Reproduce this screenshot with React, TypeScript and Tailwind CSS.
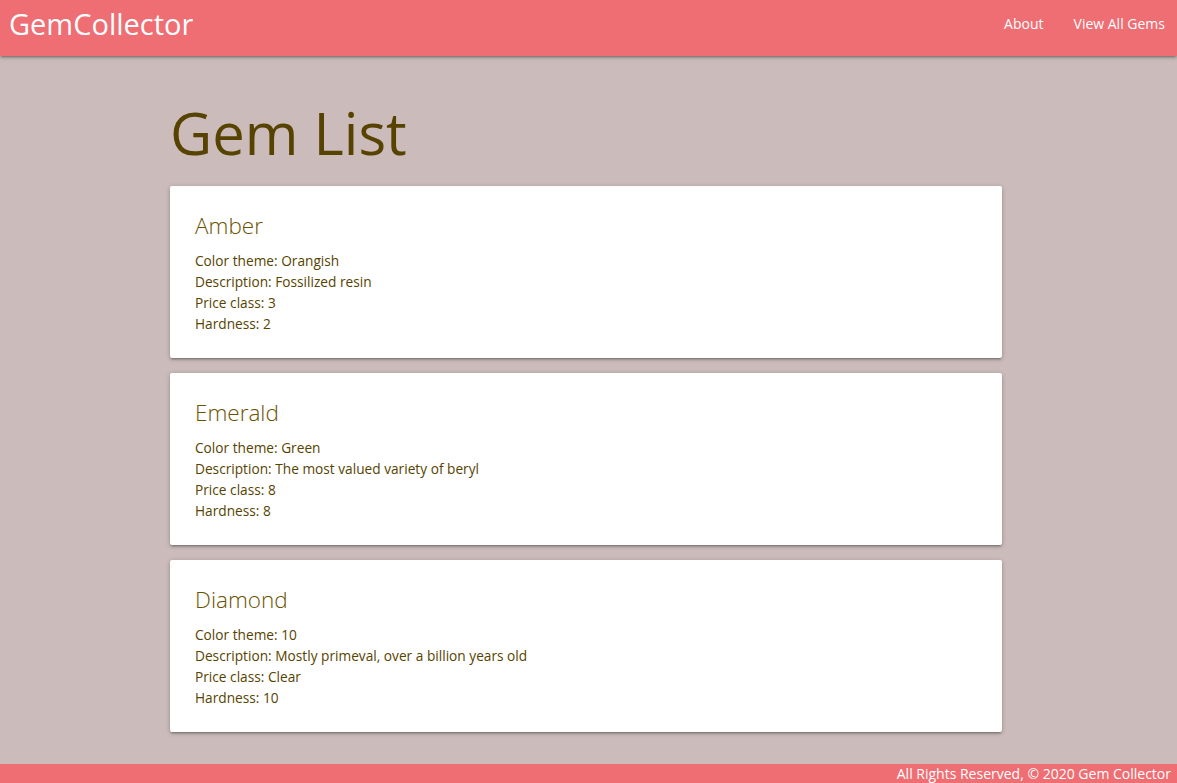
const gems = [
  { name: "Amber", color: "Orangish", description: "Fossilized resin", price: "3", hardness: "2" },
  { name: "Emerald", color: "Green", description: "The most valued variety of beryl", price: "8", hardness: "8" },
  { name: "Diamond", color: "10", description: "Mostly primeval, over a billion years old", price: "Clear", hardness: "10" },
];

const font = "font-['Segoe_UI','Open_Sans',sans-serif]";

function GemCard({ gem }: { gem: (typeof gems)[number] }) {
  return (
    <div className="mb-[15px] rounded-[2px] bg-white p-6 pl-[25px] shadow-[0_2px_2px_0_rgba(0,0,0,0.14),0_3px_1px_-2px_rgba(0,0,0,0.12),0_1px_5px_0_rgba(0,0,0,0.2)]">
      <span className="mb-2 block text-[22.5px] font-light leading-8 text-[#6b5200]">{gem.name}</span>
      <p className="text-[13.7px] leading-[21px]">Color theme: {gem.color}</p>
      <p className="text-[13.7px] leading-[21px]">Description: {gem.description}</p>
      <p className="text-[13.7px] leading-[21px]">Price class: {gem.price}</p>
      <p className="text-[13.7px] leading-[21px]">Hardness: {gem.hardness}</p>
    </div>
  );
}

export default function App() {
  return (
    <div className={`flex min-h-screen flex-col bg-[#cbbbbb] text-[#574300] ${font}`}>
      <nav className="relative z-10 flex h-[56px] items-start justify-between bg-[#ee6e73] text-white shadow-[0_2px_2px_0_rgba(0,0,0,0.14),0_3px_1px_-2px_rgba(0,0,0,0.12),0_1px_5px_0_rgba(0,0,0,0.2)]">
        <a className="pl-[9px] text-[29px] leading-[48px]">GemCollector</a>
        <ul className="flex">
          <li><a className="block px-[15px] text-[14px] leading-[48px]">About</a></li>
          <li><a className="block pl-[15px] pr-[12px] text-[14px] leading-[48px]">View All Gems</a></li>
        </ul>
      </nav>
      <main className="ml-[170px] w-[832px]">
        <h1 className="mt-[44px] mb-[20px] text-[58px] leading-[66px]">Gem List</h1>
        {gems.map((g) => (
          <GemCard key={g.name} gem={g} />
        ))}
      </main>
      <footer className="mt-auto h-[19px] bg-[#ee6e73] pr-[6px] text-right text-[14px] leading-[19px] text-white">
        All Rights Reserved, © 2020 Gem Collector
      </footer>
    </div>
  );
}
